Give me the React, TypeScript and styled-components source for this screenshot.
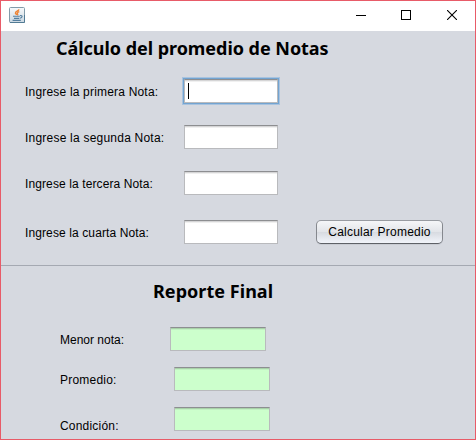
import React from "react";
import styled, { createGlobalStyle } from "styled-components";

const GlobalStyle = createGlobalStyle`
  * { box-sizing: border-box; }
  html, body { margin: 0; background: #fff; overflow: hidden; }
`;

const Window = styled.main`
  width: 476px;
  height: 440px;
  display: flex;
  flex-direction: column;
  border: 1px solid #e85b68;
  background: #d6d9e0;
  color: #000;
  font: 12px/16px "Liberation Sans", Arial, sans-serif;
`;

const TitleBar = styled.header`
  height: 30px;
  flex: none;
  display: flex;
  justify-content: space-between;
  background: #fff;
`;

const AppIcon = styled.svg`
  display: block;
  width: 16px;
  height: 16px;
  margin: 6px 0 0 8px;
`;

const Controls = styled.div`
  display: flex;
`;

const ControlButton = styled.button<{ $width?: number }>`
  width: ${(p) => p.$width ?? 46}px;
  height: 28px;
  padding: 0;
  border: 0;
  background: none;
  display: flex;
  align-items: center;
  justify-content: center;
`;

const Section = styled.section<{ $height: number }>`
  height: ${(p) => p.$height}px;
  flex: none;
  display: flex;
  flex-direction: column;
`;

const Heading = styled.h1<{ $indent: number; $top: number; $spacing?: number }>`
  margin: ${(p) => p.$top}px 0 0 ${(p) => p.$indent}px;
  height: 22px;
  font: bold 18px/22px "Noto Sans", Tahoma, sans-serif;
  letter-spacing: ${(p) => p.$spacing ?? -0.04}px;
  white-space: nowrap;
`;

const Row = styled.div<{ $gap: number; $indent: number }>`
  height: 24px;
  margin-top: ${(p) => p.$gap}px;
  padding-left: ${(p) => p.$indent}px;
  display: flex;
`;

const Label = styled.label<{ $width: number; $drop?: number; $spacing?: number }>`
  width: ${(p) => p.$width}px;
  flex: none;
  padding-top: ${(p) => p.$drop ?? 5}px;
  letter-spacing: ${(p) => p.$spacing ?? 0}px;
  white-space: nowrap;
`;

const Field = styled.div<{ $result?: boolean; $focused?: boolean }>`
  width: ${(p) => (p.$result ? 96 : 94)}px;
  height: 24px;
  flex: none;
  padding: 3px 0 0 3px;
  border: 1px solid #b9babd;
  border-top-color: #8d8e91;
  background: ${(p) =>
    p.$result
      ? "linear-gradient(#a9d1a9 0 1px, #c2f1c2 1px 2px, #ccffcc 2px)"
      : "linear-gradient(#d5d5d6 0 1px, #f0f0f0 1px 2px, #fff 2px)"};
  box-shadow: ${(p) => (p.$focused ? "0 0 0 1px #73a4d1, 0 0 0 2px #a8c3df" : "none")};
`;

const Caret = styled.span`
  display: block;
  width: 1px;
  height: 16px;
  background: #000;
`;

const CalcButton = styled.button`
  width: 127px;
  height: 24px;
  margin-left: 38px;
  padding: 0;
  border: 1px solid #85888e;
  border-top-color: #989ba1;
  border-bottom-color: #5e6167;
  border-radius: 5px;
  background: linear-gradient(#f5f6f8, #e3e5e9 48%, #d8dbe1 52%, #f1f4fa);
  box-shadow: 0 1px 0 #c9ccd3;
  color: #000;
  font: 12px/22px "Liberation Sans", Arial, sans-serif;
  letter-spacing: 0.22px;
  white-space: nowrap;
`;

const Divider = styled.hr`
  width: 100%;
  height: 1px;
  flex: none;
  margin: 0;
  border: 0;
  background: #a5a9b2;
`;

const grades = [
  { text: "Ingrese la primera Nota:", gap: 20, spacing: 0.19 },
  { text: "Ingrese la segunda Nota:", gap: 22, spacing: 0.22 },
  { text: "Ingrese la tercera Nota:", gap: 22, spacing: 0.11 },
  { text: "Ingrese la cuarta Nota:", gap: 25, spacing: 0.11 },
];

const results = [
  { text: "Menor nota:", gap: 25, width: 110, drop: 5, spacing: 0 },
  { text: "Promedio:", gap: 16, width: 114, drop: 5, spacing: 0.22 },
  { text: "Condición:", gap: 16, width: 114, drop: 11, spacing: 0.2 },
];

export default function App() {
  return (
    <Window>
      <GlobalStyle />
      <TitleBar>
        <AppIcon viewBox="0 0 16 16" fill="none" aria-hidden="true">
          <defs>
            <linearGradient id="tile" x2="0" y2="1">
              <stop stopColor="#f7f9fa" />
              <stop offset="1" stopColor="#cbd8e2" />
            </linearGradient>
          </defs>
          <rect x=".5" y=".5" width="15" height="15" rx="1" fill="url(#tile)" stroke="#829baa" />
          <path d="M1 15.5h14.5V8" stroke="#527b94" />
          <path d="M10 2.3C9.8 4 6 4.4 6.4 6.1c.1.9 1.2 1.1 1.2 2M10.3 4.7C8 5.5 7.8 6.2 8.5 6.8c.5.5.3 1-.2 1.4" stroke="#ee8435" strokeWidth="1.3" />
          <path d="M4 9.3h6.8M5 11.4h5.2M3.6 13.4h8.2M11 8.6c3-.4 2.6 2.1-.2 2.6" stroke="#557f9f" strokeWidth="1.1" />
        </AppIcon>
        <Controls>
          <ControlButton $width={44} aria-label="Minimizar">
            <svg width="10" height="10" shapeRendering="crispEdges"><path d="M0 5.5h10" stroke="#000" /></svg>
          </ControlButton>
          <ControlButton aria-label="Maximizar">
            <svg width="10" height="10" shapeRendering="crispEdges"><path d="M.5.5h9v9h-9z" fill="none" stroke="#000" /></svg>
          </ControlButton>
          <ControlButton aria-label="Cerrar">
            <svg width="10" height="10"><path d="m0 0 10 10M10 0 0 10" stroke="#000" strokeWidth="1.1" /></svg>
          </ControlButton>
        </Controls>
      </TitleBar>
      <Section $height={234}>
        <Heading $indent={55} $top={6}>Cálculo del promedio de Notas</Heading>
        {grades.map((g, i) => (
          <Row key={g.text} $gap={g.gap} $indent={24}>
            <Label $width={159} $spacing={g.spacing}>{g.text}</Label>
            <Field $focused={i === 0}>{i === 0 && <Caret />}</Field>
            {i === 3 && <CalcButton>Calcular Promedio</CalcButton>}
          </Row>
        ))}
      </Section>
      <Divider />
      <Section $height={173}>
        <Heading $indent={152} $top={14} $spacing={0.04}>Reporte Final</Heading>
        {results.map((r) => (
          <Row key={r.text} $gap={r.gap} $indent={59}>
            <Label $width={r.width} $drop={r.drop} $spacing={r.spacing}>{r.text}</Label>
            <Field $result />
          </Row>
        ))}
      </Section>
    </Window>
  );
}
